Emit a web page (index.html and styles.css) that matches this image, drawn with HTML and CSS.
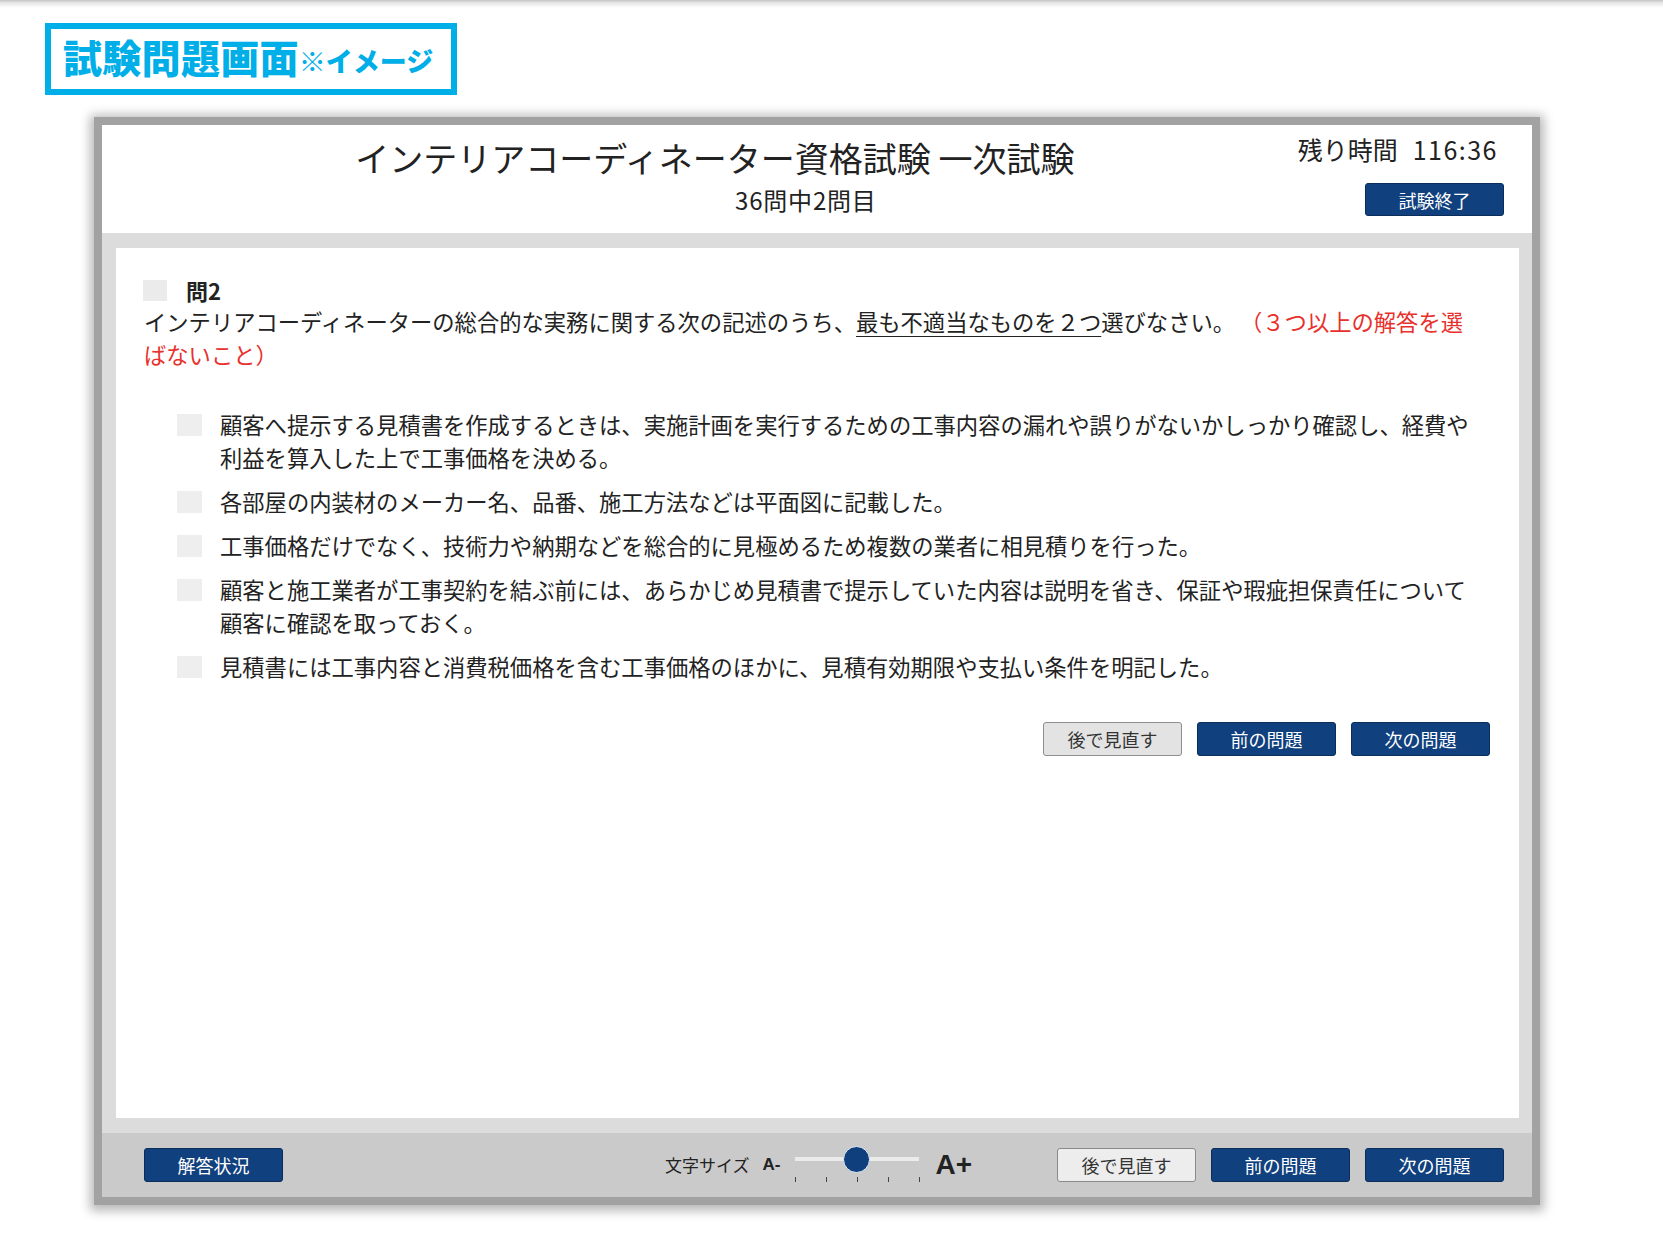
FILE: index.html
```html
<!DOCTYPE html>
<html lang="ja">
<head>
<meta charset="utf-8">
<title>試験問題画面</title>
<link rel="stylesheet" href="styles.css">
</head>
<body>
<div class="topshade"></div>
<div class="tag"><span class="tag-main">試験問題画面</span><span class="tag-sub">※イメージ</span></div>

<div class="window">
  <header class="head">
    <div class="head-main">
      <h1 class="title">インテリアコーディネーター資格試験 一次試験</h1>
      <div class="count">36問中2問目</div>
    </div>
    <div class="head-side">
      <div class="timer">残り時間<span class="time">116:36</span></div>
      <button class="btn btn-navy">試験終了</button>
    </div>
  </header>

  <div class="band">
    <main class="panel">
      <div class="qhead"><span class="box"></span><span class="qno">問2</span></div>
      <p class="qtext"><span>インテリアコーディネーターの総合的な実務に関する次の記述のうち、</span><u>最も不適当なものを２つ</u><span>選びなさい。 </span><span class="red">（３つ以上の解答を選ばないこと）</span></p>

      <ul class="opts">
        <li><span class="cb"></span><span class="txt">顧客へ提示する見積書を作成するときは、実施計画を実行するための工事内容の漏れや誤りがないかしっかり確認し、経費や利益を算入した上で工事価格を決める。</span></li>
        <li><span class="cb"></span><span class="txt">各部屋の内装材のメーカー名、品番、施工方法などは平面図に記載した。</span></li>
        <li><span class="cb"></span><span class="txt">工事価格だけでなく、技術力や納期などを総合的に見極めるため複数の業者に相見積りを行った。</span></li>
        <li><span class="cb"></span><span class="txt">顧客と施工業者が工事契約を結ぶ前には、あらかじめ見積書で提示していた内容は説明を省き、保証や瑕疵担保責任について顧客に確認を取っておく。</span></li>
        <li><span class="cb"></span><span class="txt">見積書には工事内容と消費税価格を含む工事価格のほかに、見積有効期限や支払い条件を明記した。</span></li>
      </ul>

      <div class="actions">
        <button class="btn btn-gray">後で見直す</button>
        <button class="btn btn-navy">前の問題</button>
        <button class="btn btn-navy">次の問題</button>
      </div>
    </main>
  </div>

  <footer class="foot">
    <button class="btn btn-navy">解答状況</button>
    <div class="size">
      <span class="size-label">文字サイズ</span>
      <span class="a-minus">A-</span>
      <div class="slider">
        <span class="track"></span>
        <span class="thumb"></span>
        <span class="ticks"><i></i><i></i><i></i><i></i><i></i></span>
      </div>
      <span class="a-plus">A+</span>
    </div>
    <div class="foot-btns">
      <button class="btn btn-light">後で見直す</button>
      <button class="btn btn-navy">前の問題</button>
      <button class="btn btn-navy">次の問題</button>
    </div>
  </footer>
</div>
</body>
</html>
```

FILE: styles.css
```css
html, body {
  margin: 0;
  padding: 0;
  background: #ffffff;
}

body {
  font-family: "Noto Sans CJK JP", "Noto Sans", sans-serif;
  color: #222222;
  width: 1663px;
  height: 1256px;
  overflow: hidden;
}

.topshade {
  height: 8px;
  background: linear-gradient(to bottom, #c4c4c4 0%, #e6e6e6 35%, #ffffff 100%);
}

.tag {
  display: inline-flex;
  align-items: center;
  height: 60px;
  margin: 15px 0 0 45px;
  padding: 0 18px 0 12px;
  border: 6px solid #00aee8;
  color: #00aee8;
  font-weight: 900;
}

.tag-main {
  font-size: 39px;
  line-height: 48px;
  letter-spacing: 0.3px;
  position: relative;
  top: -3px;
}

.tag-sub {
  font-size: 27px;
  line-height: 34px;
  position: relative;
  top: 2px;
}

.window {
  width: 1430px;
  margin: 30px 0 0 102px;
  background: #dcdcdc;
  box-shadow: 0 0 0 8px #a2a2a2, 0 2px 10px 12px rgba(0, 0, 0, 0.28);
}

.head {
  height: 108px;
  box-sizing: border-box;
  background: #ffffff;
  display: flex;
  padding: 0 28px 0 30px;
}

.head-main {
  flex: 1;
  text-align: center;
  padding-top: 13px;
}

.title {
  margin: 0;
  font-size: 34px;
  line-height: 40px;
  font-weight: 400;
  color: #222222;
}

.count {
  margin-top: 7px;
  font-size: 24px;
  line-height: 30px;
  letter-spacing: 0.8px;
  padding-left: 182px;
}

.head-side {
  display: flex;
  flex-direction: column;
  align-items: flex-end;
  padding-top: 9px;
}

.timer {
  font-size: 25px;
  line-height: 30px;
  margin-right: 6px;
}

.time {
  margin-left: 15px;
  letter-spacing: 1.5px;
}

.head-side .btn {
  margin-top: 19px;
  height: 33px;
}

.btn {
  width: 139px;
  height: 34px;
  box-sizing: border-box;
  border-radius: 3px;
  font-family: "Noto Sans CJK JP", sans-serif;
  font-size: 18px;
  line-height: 1;
  padding: 0;
  cursor: pointer;
}

.btn-navy {
  background: #10407d;
  border: 1px solid #0a2d5a;
  color: #ffffff;
}

.btn-gray {
  background: #e3e3e3;
  border: 1px solid #8e8e8e;
  color: #333333;
}

.btn-light {
  background: #ededed;
  border: 1px solid #8a8a8a;
  color: #333333;
}

.band {
  padding: 15px 13px 15px 14px;
}

.panel {
  display: block;
  height: 870px;
  box-sizing: border-box;
  background: #ffffff;
  padding: 27px 29px 0 28px;
}

.qhead {
  display: flex;
  align-items: center;
  height: 30px;
}

.box {
  width: 24px;
  height: 21px;
  margin-left: -1px;
  background: #ebebeb;
}

.qno {
  margin-left: 19px;
  font-size: 22px;
  font-weight: 700;
  line-height: 30px;
}

.qtext {
  margin: 0;
  width: 1330px;
  font-size: 22.3px;
  line-height: 33px;
}

.qtext u {
  text-underline-offset: 5px;
  text-decoration-thickness: 1px;
}

.red {
  color: #e8302c;
}

.opts {
  list-style: none;
  margin: 37px 0 0 33px;
  padding: 0;
}

.opts li {
  display: flex;
  align-items: flex-start;
  margin-bottom: 11px;
}

.cb {
  flex: none;
  width: 25px;
  height: 22px;
  margin-top: 6px;
  background: #eeeeee;
}

.txt {
  margin-left: 18px;
  width: 1260px;
  font-size: 22.3px;
  line-height: 33px;
}

.actions {
  display: flex;
  justify-content: flex-end;
  gap: 15px;
  margin-top: 39px;
}

.foot {
  height: 64px;
  box-sizing: border-box;
  background: #cacaca;
  display: flex;
  align-items: center;
  padding: 0 28px 1px 42px;
}

.size {
  display: flex;
  align-items: center;
  margin-left: auto;
  margin-right: 85px;
}

.size-label {
  font-size: 17px;
  color: #222222;
}

.a-minus {
  margin-left: 13px;
  font-family: "Liberation Sans", sans-serif;
  font-weight: 700;
  font-size: 17px;
}

.slider {
  position: relative;
  width: 126px;
  height: 40px;
  margin-left: 14px;
}

.track {
  position: absolute;
  left: 1px;
  right: 1px;
  top: 12px;
  height: 4px;
  background: #ebebeb;
}

.thumb {
  position: absolute;
  left: 49px;
  top: 1px;
  width: 25px;
  height: 25px;
  border-radius: 50%;
  background: #0f3f7c;
  border: 1px solid #e4eef8;
}

.ticks {
  position: absolute;
  left: 1px;
  right: 0;
  top: 32px;
  display: flex;
  justify-content: space-between;
}

.ticks i {
  width: 1px;
  height: 5px;
  background: #444444;
}

.a-plus {
  margin-left: 15px;
  font-family: "Liberation Sans", sans-serif;
  font-weight: 700;
  font-size: 28px;
}

.foot-btns {
  display: flex;
  gap: 15px;
}
```
